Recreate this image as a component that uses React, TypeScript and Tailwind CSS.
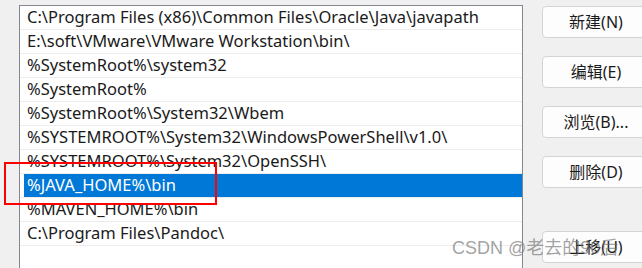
import React from "react";

const rows = [
  "C:\\Program Files (x86)\\Common Files\\Oracle\\Java\\javapath",
  "E:\\soft\\VMware\\VMware Workstation\\bin\\",
  "%SystemRoot%\\system32",
  "%SystemRoot%",
  "%SystemRoot%\\System32\\Wbem",
  "%SYSTEMROOT%\\System32\\WindowsPowerShell\\v1.0\\",
  "%SYSTEMROOT%\\System32\\OpenSSH\\",
  "%JAVA_HOME%\\bin",
  "%MAVEN_HOME%\\bin",
  "C:\\Program Files\\Pandoc\\",
];

const font = { fontFamily: "'Noto Sans', 'Noto Sans CJK SC', sans-serif" };

function Btn({ label }: { label: string }) {
  return (
    <div className="h-[32px] w-[108px] shrink-0 rounded-[4px] border border-[#d4d4d4] bg-[#fdfdfd] flex items-center justify-center text-[16px] text-[#1a1a1a]">
      {label}
    </div>
  );
}

export default function App() {
  return (
    <div
      className="relative w-[642px] h-[268px] overflow-hidden bg-[#f0f0f0] flex"
      style={font}
    >
      <div className="ml-[19px] mt-[5px] w-[504px] h-[300px] shrink-0 border border-[#828790] bg-white flex flex-col">
        {rows.map((r, i) => {
          const sel = i === 7;
          return (
            <div
              key={i}
              className="h-[24px] shrink-0 border-b border-[#ececec] pl-[4px] flex"
            >
              <div
                className={
                  "flex-1 flex items-center pl-[3px] text-[16.5px] whitespace-nowrap " +
                  (sel ? "bg-[#0078d7] text-white" : "text-[#1a1a1a]")
                }
              >
                {r}
              </div>
            </div>
          );
        })}
      </div>
      <div className="ml-[19px] mt-[6px] flex flex-col gap-[18px]">
        <Btn label="新建(N)" />
        <Btn label="编辑(E)" />
        <Btn label="浏览(B)..." />
        <Btn label="删除(D)" />
        <div className="mt-[25px]">
          <Btn label="上移(U)" />
        </div>
      </div>
      <div className="absolute left-[4px] top-[162px] w-[213px] h-[43px] border-2 border-[#ff0000]" />
      <div
        className="absolute left-[452px] top-[236px] text-[18px] leading-[24px] text-[rgba(110,110,110,0.65)] whitespace-nowrap"
        style={{ fontFamily: "'Liberation Sans', 'Noto Sans CJK SC', sans-serif" }}
      >
        CSDN @老去的90后
      </div>
    </div>
  );
}
